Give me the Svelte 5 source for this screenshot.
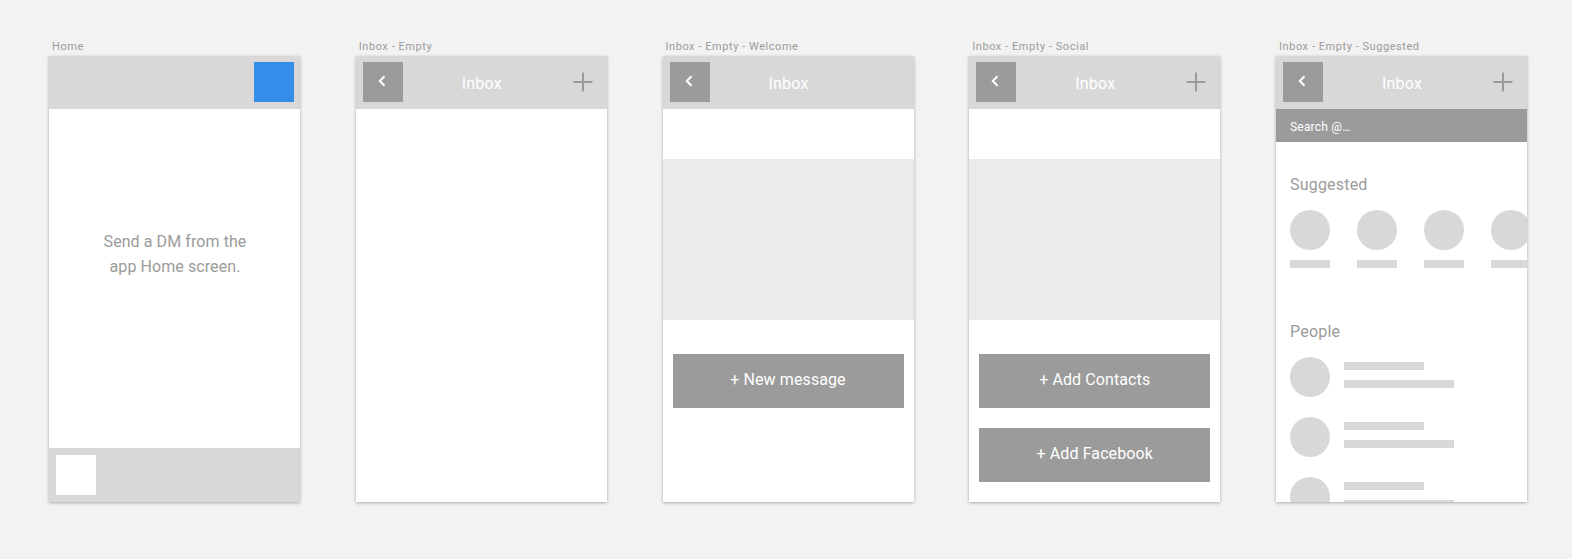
<script>
  const suggested = [1, 2, 3, 4];
  const people = [1, 2, 3];
</script>

{#snippet inboxHeader(showPlus = true)}
  <header class="bar">
    <button class="back" aria-label="Back">
      <svg width="10" height="12" viewBox="0 0 10 12">
        <path d="M7.5 1.2 L2.8 6 L7.5 10.8" fill="none" stroke="#fff" stroke-width="2" />
      </svg>
    </button>
    <span class="title">Inbox</span>
    {#if showPlus}
      <svg class="plus" width="20" height="20" viewBox="0 0 20 20">
        <path d="M10 0.5 V19.5 M0.5 10 H19.5" fill="none" stroke="#9b9b9b" stroke-width="2" />
      </svg>
    {/if}
  </header>
{/snippet}

<div class="board">
  <section class="artboard">
    <div class="label">Home</div>
    <div class="screen home">
      <header class="bar home-bar"><div class="blue"></div></header>
      <p class="message">Send a DM from the<br />app Home screen.</p>
      <footer class="tabbar"><div class="tab"></div></footer>
    </div>
  </section>

  <section class="artboard">
    <div class="label">Inbox - Empty</div>
    <div class="screen">{@render inboxHeader()}</div>
  </section>

  <section class="artboard">
    <div class="label">Inbox - Empty - Welcome</div>
    <div class="screen">
      {@render inboxHeader(false)}
      <div class="panel"></div>
      <div class="actions">
        <button class="action">+ New message</button>
      </div>
    </div>
  </section>

  <section class="artboard">
    <div class="label">Inbox - Empty - Social</div>
    <div class="screen">
      {@render inboxHeader()}
      <div class="panel"></div>
      <div class="actions">
        <button class="action">+ Add Contacts</button>
        <button class="action">+ Add Facebook</button>
      </div>
    </div>
  </section>

  <section class="artboard">
    <div class="label">Inbox - Empty - Suggested</div>
    <div class="screen">
      {@render inboxHeader()}
      <div class="search">Search @…</div>
      <h2 class="heading first">Suggested</h2>
      <div class="suggested">
        {#each suggested as item (item)}
          <div class="person">
            <div class="avatar"></div>
            <div class="line name"></div>
          </div>
        {/each}
      </div>
      <h2 class="heading second">People</h2>
      <div class="people">
        {#each people as item (item)}
          <div class="row">
            <div class="avatar"></div>
            <div class="lines">
              <div class="line short"></div>
              <div class="line long"></div>
            </div>
          </div>
        {/each}
      </div>
    </div>
  </section>
</div>

<style>
  :global(body) {
    margin: 0;
    background: #f2f2f2;
    font-family: Roboto, "Liberation Sans", sans-serif;
  }

  .board {
    display: flex;
    gap: 55.75px;
    height: 559px;
    padding: 40px 0 0 49px;
    box-sizing: border-box;
    overflow: hidden;
  }

  .artboard {
    width: 251px;
    flex: none;
  }

  .label {
    height: 16px;
    padding-left: 3px;
    font-size: 11px;
    line-height: 14px;
    letter-spacing: 0.55px;
    color: #9b9b9b;
  }

  .screen {
    display: flex;
    flex-direction: column;
    height: 446px;
    overflow: hidden;
    background: #fff;
    box-shadow: 0 1px 3px rgba(0, 0, 0, 0.3);
  }

  .bar {
    flex: none;
    display: flex;
    align-items: flex-start;
    justify-content: space-between;
    height: 53px;
    padding: 6px 6px 6px 7px;
    box-sizing: border-box;
    position: relative;
    background: #d8d8d8;
  }

  .home-bar {
    justify-content: flex-end;
  }

  .blue {
    width: 40px;
    height: 40px;
    background: #348ee9;
  }

  .back {
    display: flex;
    align-items: center;
    justify-content: center;
    width: 40px;
    height: 40px;
    padding: 0 2px 3px 0;
    border: 0;
    background: #9b9b9b;
  }

  .title {
    position: absolute;
    left: 1px;
    right: 0;
    top: 18px;
    text-align: center;
    font-size: 16px;
    line-height: 20px;
    letter-spacing: 0.2px;
    color: #fff;
  }

  .plus {
    margin: 10px 8px 0 0;
  }

  .home .message {
    flex: 1;
    margin: 0;
    padding: 120px 0 0 1px;
    text-align: center;
    font-size: 16px;
    line-height: 25px;
    letter-spacing: 0.08px;
    color: #9b9b9b;
  }

  .tabbar {
    flex: none;
    height: 54px;
    padding: 7px;
    box-sizing: border-box;
    background: #d8d8d8;
  }

  .tab {
    width: 40px;
    height: 40px;
    background: #fff;
  }

  .panel {
    flex: none;
    height: 161px;
    margin-top: 50px;
    background: #ebebeb;
  }

  .actions {
    display: flex;
    flex-direction: column;
    gap: 20.5px;
    padding: 34px 10px 0;
  }

  .action {
    height: 53.5px;
    padding: 0 0 3px;
    border: 0;
    background: #9b9b9b;
    color: #fff;
    font: inherit;
    font-size: 16px;
    letter-spacing: 0.1px;
  }

  .search {
    flex: none;
    height: 33px;
    padding-left: 14px;
    background: #9b9b9b;
    color: #fff;
    font-size: 12px;
    line-height: 36px;
    letter-spacing: 0.2px;
  }

  .heading {
    margin: 0;
    padding-left: 14px;
    font-size: 16px;
    font-weight: 400;
    line-height: 20px;
    letter-spacing: 0.2px;
    color: #9b9b9b;
  }

  .heading.first {
    margin-top: 33px;
  }

  .heading.second {
    margin-top: 54px;
  }

  .suggested {
    flex: none;
    display: flex;
    gap: 27px;
    margin-top: 15px;
    padding-left: 14px;
  }

  .person {
    flex: none;
    width: 40px;
  }

  .avatar {
    flex: none;
    width: 40px;
    height: 40px;
    border-radius: 50%;
    background: #d8d8d8;
  }

  .line {
    height: 8px;
    background: #d8d8d8;
  }

  .name {
    margin-top: 10px;
  }

  .people {
    display: flex;
    flex-direction: column;
    gap: 20px;
    margin-top: 15px;
    padding-left: 14px;
  }

  .row {
    display: flex;
    gap: 14px;
  }

  .lines {
    display: flex;
    flex-direction: column;
    gap: 10px;
    padding-top: 5px;
  }

  .short {
    width: 80px;
  }

  .long {
    width: 110px;
  }
</style>
